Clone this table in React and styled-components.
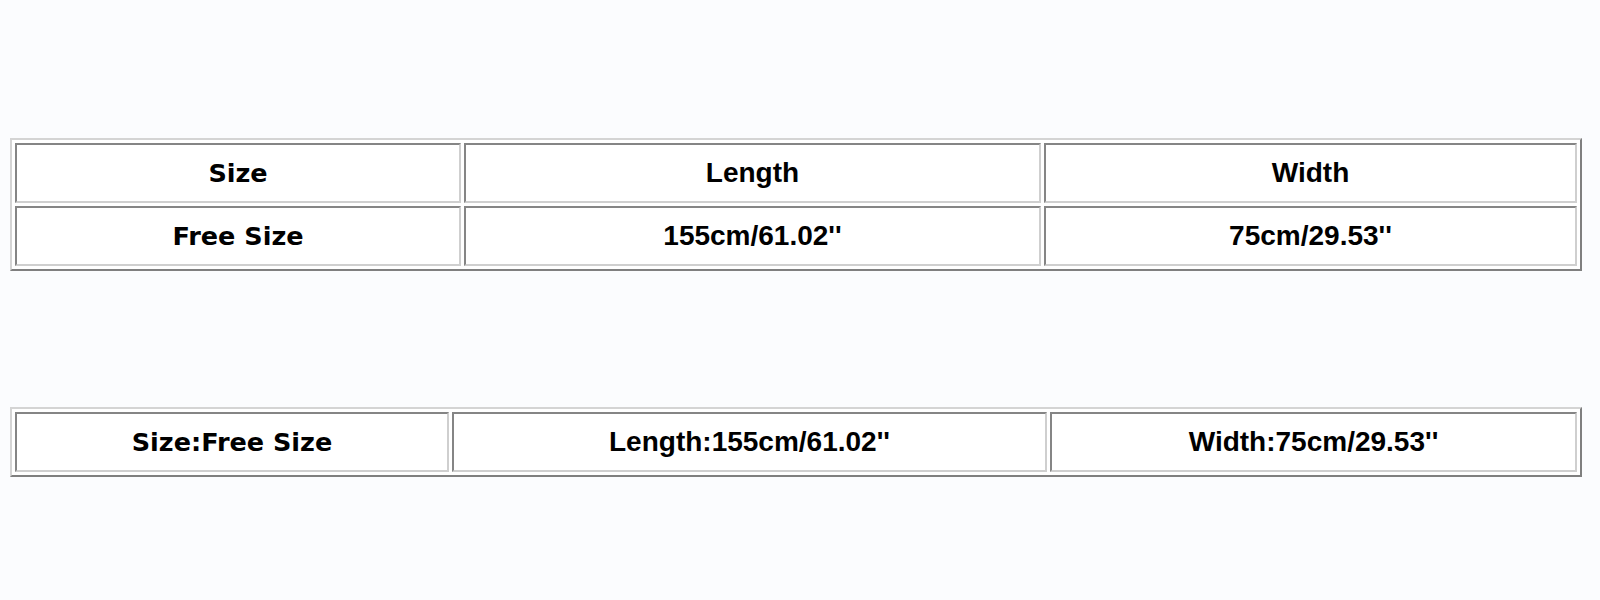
import React from "react";
import styled, { createGlobalStyle } from "styled-components";

const Global = createGlobalStyle`
  html, body { margin: 0; padding: 0; background: #fbfcfe; }
  body { font-family: "Liberation Sans", Arial, sans-serif; }
`;

const Page = styled.div`
  width: 1600px;
  height: 600px;
  box-sizing: border-box;
  padding: 138px 0 0 10px;
  display: flex;
  flex-direction: column;
  gap: 136px;
  background: #fbfcfe;
`;

const Table = styled.div`
  width: 1572px;
  box-sizing: border-box;
  display: grid;
  grid-template-columns: ${(p) => p.$cols};
  grid-auto-rows: 60px;
  gap: 3px;
  padding: 3px;
  background: #ffffff;
  border: 2px solid;
  border-color: #d4d4d4 #7f7f7f #7f7f7f #d4d4d4;
`;

const Cell = styled.div`
  box-sizing: border-box;
  display: flex;
  align-items: center;
  justify-content: center;
  border: 2px solid;
  border-color: #858585 #cfcfcf #cfcfcf #858585;
  background: #ffffff;
  color: #000;
  font-weight: 700;
  font-family: ${(p) =>
    p.$wide ? '"DejaVu Sans", Verdana, sans-serif' : '"Liberation Sans", Arial, sans-serif'};
  font-size: ${(p) => (p.$wide ? "25.5px" : "28px")};
  white-space: nowrap;
`;

export default function App() {
  return (
    <>
      <Global />
      <Page>
        <Table $cols="446px 577px 533px">
          <Cell $wide>Size</Cell>
          <Cell>Length</Cell>
          <Cell>Width</Cell>
          <Cell $wide>Free Size</Cell>
          <Cell>155cm/61.02''</Cell>
          <Cell>75cm/29.53''</Cell>
        </Table>
        <Table $cols="434px 595px 527px">
          <Cell $wide>Size:Free Size</Cell>
          <Cell>Length:155cm/61.02''</Cell>
          <Cell>Width:75cm/29.53''</Cell>
        </Table>
      </Page>
    </>
  );
}
